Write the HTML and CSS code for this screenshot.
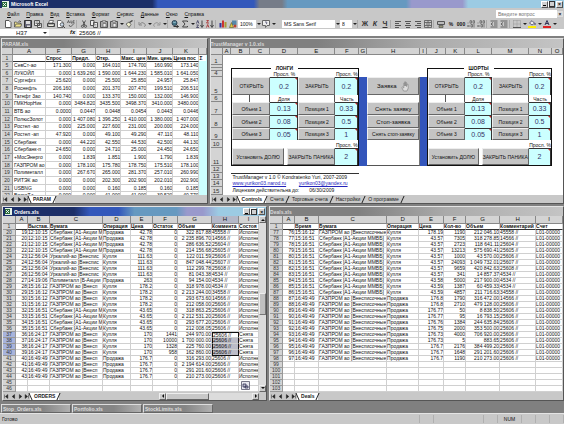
FILE: index.html
```html
<!DOCTYPE html>
<html lang="ru">
<head>
<meta charset="utf-8">
<title>Microsoft Excel</title>
<link rel="stylesheet" href="styles.css">
</head>
<body>
<svg class="defs" aria-hidden="true">
  <symbol id="new" viewBox="0 0 8 8"><path d="M1.5.5h3.500l2 2v5h-5.500z" fill="#fff" stroke="#555"/></symbol>
  <symbol id="open" viewBox="0 0 8 8"><path d="M.5 7V2h2l1 1h3v1M.5 7l1.500-3h6L6.500 7z" fill="#eee28a" stroke="#555" stroke-width=".8"/><path d="M4.500 1.500q1.500-1.500 2.500.5" fill="none" stroke="#333" stroke-width=".8"/></symbol>
  <symbol id="save" viewBox="0 0 8 8"><path d="M.5.5h7v7h-7z" fill="#667" stroke="#333"/><path d="M2 1h4v3H2zM3 5.500h3V7H3z" fill="#ddd"/></symbol>
  <symbol id="mail" viewBox="0 0 8 8"><path d="M.5.5h5v5h-5zM3.500 3.500h4v4h-4z" fill="#eee" stroke="#555"/><path d="M1.500 2h3M1.500 3.500h2M3.500 4l2 2 2-2" stroke="#555" stroke-width=".7" fill="none"/></symbol>
  <symbol id="print" viewBox="0 0 8 8"><path d="M2.500.5h4L5.500 3h-4z" fill="#fff" stroke="#555" stroke-width=".8"/><path d="M.5 3.500h7v3h-7z" fill="#aaa" stroke="#444"/><path d="M2 5.500h4" stroke="#eed"/></symbol>
  <symbol id="preview" viewBox="0 0 8 8"><path d="M.5.5h3.500l2 2v5H.5z" fill="#fff" stroke="#666"/><circle cx="5" cy="4.500" r="1.800" fill="#cde" stroke="#444" stroke-width=".8"/><path d="M6 6l2 2" stroke="#444"/></symbol>
  <symbol id="spell" viewBox="0 0 8 8"><path d="M.5 3l1-2.500 1 2.500M4 .5v2.500h1.500M7.500.8H6v2h1.500M2 5l1.500 2L7 3.500" fill="none" stroke="#555" stroke-width=".9"/></symbol>
  <symbol id="cut" viewBox="0 0 8 8"><path d="M2.500.5l2.500 5M5.500.5L3 5.500" stroke="#555"/><circle cx="2.500" cy="6.300" r="1.100" fill="none" stroke="#555"/><circle cx="5.500" cy="6.300" r="1.100" fill="none" stroke="#555"/></symbol>
  <symbol id="copy" viewBox="0 0 8 8"><path d="M.5.5H4v5H.5zM3.500 2.500h4v5h-4z" fill="#eee" stroke="#555"/><path d="M4.500 4.500h2M4.500 6h2" stroke="#777" stroke-width=".6"/></symbol>
  <symbol id="paste" viewBox="0 0 8 8"><path d="M.5 1.500h7v6h-7z" fill="#aaa" stroke="#555"/><path d="M2.500.5h3v1.500h-3zM3 3.500h3v3.500H3z" fill="#eee" stroke="#666" stroke-width=".7"/></symbol>
  <symbol id="brush" viewBox="0 0 8 8"><path d="M1 4l3-2 2 2.500L4 7.500z" fill="#eec" stroke="#555" stroke-width=".8"/><path d="M4.500 2.500L7.500.5" stroke="#444" stroke-width="1.400"/></symbol>
  <symbol id="undo" viewBox="0 0 8 8"><path d="M1 2v3h3M1.500 4.500Q4 1 6.500 3.500T6 6.500" fill="none" stroke="#888"/></symbol>
  <symbol id="redo" viewBox="0 0 8 8"><path d="M7 2v3H4M6.500 4.500Q4 1 1.500 3.500T2 6.500" fill="none" stroke="#999"/></symbol>
  <symbol id="link" viewBox="0 0 8 8"><circle cx="3.500" cy="3" r="2.500" fill="#478" stroke="#345"/><path d="M2 2q1.500 1 3 0" stroke="#bde" stroke-width=".7" fill="none"/><path d="M2.500 6.500h5M5.500 5l2 1.500-2 1.300" fill="none" stroke="#333"/></symbol>
  <symbol id="sum" viewBox="0 0 8 8"><path d="M6.500 2V1h-5l2.500 3-2.500 3h5V6" fill="none" stroke="#444"/></symbol>
  <symbol id="sort" viewBox="0 0 8 8"><path d="M.5 3.500l1.200-3 1.200 3M.5 5h2L.5 7.500h2.500" fill="none" stroke="#446" stroke-width=".9"/><path d="M6 .5v6M4.500 5L6 7.500 7.500 5" fill="none" stroke="#444"/></symbol>
  <symbol id="sort2" viewBox="0 0 8 8"><path d="M.5 7.500l1.200-3 1.200 3M.5.5h2L.5 3h2.500" fill="none" stroke="#a33" stroke-width=".9"/><path d="M6 .5v6M4.500 5L6 7.500 7.500 5" fill="none" stroke="#444"/></symbol>
  <symbol id="chart" viewBox="0 0 8 8"><path d="M.5 3h2v4.500h-2z" fill="#339"/><path d="M3 .5h2v7H3z" fill="#c33"/><path d="M5.500 2h2v5.500h-2z" fill="#a93"/></symbol>
  <symbol id="draw" viewBox="0 0 8 8"><path d="M3 .5h4.500V5H3z" fill="#58a"/><path d="M.5 7.500l2-5 2 5z" fill="#dc4" stroke="#553" stroke-width=".6"/><circle cx="6" cy="6" r="1.500" fill="#b43"/></symbol>
  <symbol id="help" viewBox="0 0 8 8"><path d="M.5.5h7v5H5l-1.500 2v-2h-3z" fill="#eee" stroke="#666"/><path d="M3 2.300q1-1 1.800 0T4 4" fill="none" stroke="#446" stroke-width=".8"/></symbol>
  <symbol id="left" viewBox="0 0 8 8"><path d="M1 1.500h6M1 3.500h4M1 5.500h6M1 7.500h4" stroke="#555"/></symbol>
  <symbol id="center" viewBox="0 0 8 8"><path d="M1 1.500h6M2 3.500h4M1 5.500h6M2 7.500h4" stroke="#555"/></symbol>
  <symbol id="right" viewBox="0 0 8 8"><path d="M1 1.500h6M3 3.500h4M1 5.500h6M3 7.500h4" stroke="#555"/></symbol>
  <symbol id="merge" viewBox="0 0 8 8"><path d="M.5.5h7v7h-7zM.5 2.500h7M.5 5.500h7M4 .5v2M4 5.500v2M2 4h4" fill="none" stroke="#555" stroke-width=".8"/></symbol>
  <symbol id="money" viewBox="0 0 8 8"><path d="M.5 1.500h7v3h-7z" fill="#bbb" stroke="#555"/><path d="M2 5.500h4v2H2z" fill="#997" stroke="#555" stroke-width=".7"/></symbol>
  <symbol id="digits" viewBox="0 0 8 8"><path d="M3 .7h1.500v2.500H3zM6 .7h1.500v2.500H6zM4 4.500h1.500V7H4zM.5 3h1M7 4v3.500M.5 6h2.500M1.500 5l-1 1 1 1" fill="none" stroke="#666" stroke-width=".8"/></symbol>
  <symbol id="indent" viewBox="0 0 8 8"><path d="M.5 1h7M4 3h3.500M4 5h3.500M.5 7h7M3 2.500L1 4l2 1.500" fill="none" stroke="#555" stroke-width=".9"/></symbol>
  <symbol id="borders" viewBox="0 0 8 8"><path d="M.5.5h7v7M.5.5v7M4 .5v7M.5 4h7" fill="none" stroke="#999" stroke-dasharray="1 1"/><path d="M0 7.500h8" stroke="#555"/></symbol>
  <symbol id="fill" viewBox="0 0 8 8"><path d="M1.500 3L4 .7 6.500 3.200 4 5z" fill="#eee" stroke="#446" stroke-width=".8"/><path d="M7 3v2" stroke="#446"/><path d="M0 6h8v2H0z" fill="#fe0"/></symbol>
  <symbol id="color" viewBox="0 0 8 8"><path d="M2 5L4 .5 6 5M2.700 3.500h2.600" fill="none" stroke="#335"/><path d="M0 6h8v2H0z" fill="#d22"/></symbol>
  <symbol id="xl" viewBox="0 0 7 7"><path d="M0 0h7v7H0z" fill="#e8f4e8"/><path d="M0 1h5v5H0z" fill="#286a3a"/><path d="M1 2l3 3M4 2L1 5" stroke="#fff" stroke-width=".9"/></symbol>
  <symbol id="nav" viewBox="0 0 26 5"><path d="M.5.5v4M4 .5v4l-2.500-2zM11 .5v4l-2.500-2zM16 .5v4l2.500-2zM22 .5v4l2.500-2zM25.500.5v4" fill="#222" stroke="#222" stroke-width=".5"/></symbol>
  <symbol id="hand" viewBox="0 0 8 11"><path d="M2.500 10L.8 6.500l.8-.5 1.200 1V2h.9v3V.8h.9V5V1.500h.9V5.500l.6-2.500h.8L7.300 7 6 10z" fill="#ddd" stroke="#888" stroke-width=".7"/></symbol>
</svg>

<div class="app">
  <header class="titlebar">
    <svg class="xl"><use href="#xl"/></svg><h1>Microsoft Excel</h1>
    <div class="winbtns"><button class="min" aria-label="Свернуть"></button><button class="max" aria-label="Восстановить"></button><button class="close" aria-label="Закрыть">×</button></div>
  </header>

  <nav class="menubar">
    <a href="#">Файл</a><a href="#">Правка</a><a href="#">Вид</a><a href="#">Вставка</a><a href="#">Формат</a><a href="#">Сервис</a><a href="#">Данные</a><a href="#">Окно</a><a href="#">Справка</a>
    <input class="ask" type="text" placeholder="Введите вопрос" aria-label="Введите вопрос">
    <button class="closebook" aria-label="Закрыть книгу">×</button>
  </nav>

  <div class="toolbar" id="toolbar">
  </div>

  <div class="formula">
    <input class="namebox" type="text" value="H37" aria-label="Имя">
    <i class="arrow"></i><span class="fx">fx</span>
    <input class="fvalue" type="text" value="25606 //" aria-label="Формула">
  </div>

  <main class="workspace">
    <div class="row top">
      <section class="window param">
        <h2 class="caption">PARAM.xls</h2>
        <div class="sheet"><table id="param"></table></div>
        <div class="tabs"><svg class="nav"><use href="#nav"/></svg><button class="tab on">PARAM</button></div>
      </section>

      <section class="window trust">
        <h2 class="caption">TrustManager v 1.0.xls</h2>
        <div class="sheet form" id="form">
          <div class="panel longs">
            <b class="legend">ЛОНГИ</b>
          </div>
          <div class="stripe s1"></div>
          <div class="middle">
            <button class="m5">Заявка <svg class="hand"><use href="#hand"/></svg></button>
            <button class="m7">Снять заявку</button>
            <button class="m8">Стоп-заявка</button>
            <button class="m9">Снять стоп-заявку</button>
          </div>
          <div class="stripe s2"></div>
          <div class="panel shorts">
            <b class="legend">ШОРТЫ</b>
          </div>
          <div class="about about1">TrustManager v 1.0 © Kondratenko Yuri, 2007-2009</div>
          <div class="about about2"><a href="#">www.yurikon03.narod.ru</a><a href="#">yurikon03@yandex.ru</a></div>
          <div class="about about3"><span>Лицензия действительна до:</span><span>06/30/2009</span></div>
        </div>
        <div class="tabs"><svg class="nav"><use href="#nav"/></svg><button class="tab on">Controls</button><button class="tab">Счета</button><button class="tab">Торговые счета</button><button class="tab">Настройки</button><button class="tab">О программе</button></div>
      </section>
    </div>

    <div class="row bottom">
      <section class="window orders active">
        <h2 class="caption"><svg class="xl"><use href="#xl"/></svg>Orders.xls
          <span class="winbtns"><button class="min" aria-label="Свернуть"></button><button class="max" aria-label="Развернуть"></button><button class="close" aria-label="Закрыть">×</button></span>
        </h2>
        <div class="body">
          <div class="sheet"><table id="orders"></table></div>
          <div class="vscroll"><button class="up" aria-label="Вверх"></button><i></i><button class="down" aria-label="Вниз"></button></div>
          <svg class="smart" viewBox="0 0 9 9"><path d="M.5.5h8v8h-8z" fill="#e8e8f0" stroke="#778"/><path d="M2 3h3v3H2zM4 5h3v2H4z" fill="#bbc" stroke="#335" stroke-width=".8"/></svg>
        </div>
        <div class="tabs"><svg class="nav"><use href="#nav"/></svg><button class="tab on">ORDERS</button>
          <div class="hscroll"><button class="prev" aria-label="Влево"></button><i></i><button class="next" aria-label="Вправо"></button></div>
        </div>
      </section>

      <section class="window deals">
        <h2 class="caption">Deals.xls</h2>
        <div class="sheet"><table id="deals"></table></div>
        <div class="tabs"><svg class="nav"><use href="#nav"/></svg><button class="tab on">Deals</button></div>
      </section>
    </div>

    <div class="minimized"><button>Stop_Orders.xls</button><button>Portfolio.xls</button><button>StockLimits.xls</button></div>
  </main>

  <footer class="status"><span class="ready">Готово</span><span class="w1"></span><span class="w2"></span><span class="w1"></span><span class="w3">NUM</span><span class="w1"></span><span class="w1"></span><span class="w1"></span></footer>
</div>
<script src="app.js"></script>
</body>
</html>
```
FILE: styles.css
```css
* { box-sizing: border-box; }
body { margin: 0; background: #fff; color: #111; font: 5px/6px "Liberation Sans", sans-serif; }
h1, h2 { margin: 0; font: inherit; font-weight: bold; }
button, input, select { margin: 0; padding: 0; border: 0; border-radius: 0; font: inherit; color: inherit; background: none; min-width: 0; }
.defs { display: none; }

.app { display: flex; flex-direction: column; height: calc(100vh - 15px); background: #c8c8c8; }

/* application caption */
.titlebar { display: flex; align-items: center; gap: 2px; height: 8px; flex: none; padding: 0 1px 0 2px; color: #fff;
  background: linear-gradient(90deg, #1c2f68 27%, #3358bb 28% 45%, #767c88 46% 50%, #6699c0 51% 72%, #9999cc 73% 82%, #9ccbe3 83%); }
.titlebar h1 { flex: 1; }
.xl { width: 7px; height: 7px; flex: none; }
.winbtns { display: flex; margin-left: auto; }
.winbtns button { width: 7px; height: 7px; background: #d0d0d0; border: 1px solid; border-color: #fff #555 #555 #fff; display: grid; place-content: center; color: #000; font-weight: bold; }
.winbtns .min::before { content: ""; width: 3px; height: 1px; margin-top: 3px; background: #000; }
.winbtns .max::before { content: ""; width: 4px; height: 4px; border: 1px solid #333; }
.winbtns .close { margin-left: 1px; }

.menubar { display: flex; align-items: center; gap: 7px; height: 11px; flex: none; padding: 0 1px 0 7px; }
.menubar a { color: #111; text-decoration: none; }
.menubar a::first-letter { text-decoration: underline; }
.ask { width: 61px; height: 8px; margin-left: auto; padding: 0 2px; background: #fff; }
.ask::placeholder { color: #777; opacity: 1; }
.closebook { margin-left: -7px; width: 6px; background: #ddd; font-weight: bold; }

.toolbar { display: flex; align-items: center; height: 10px; flex: none; padding-left: 3px; }
.toolbar button { width: 10px; height: 8px; flex: none; display: grid; place-content: center; font-weight: bold; }
.toolbar svg { width: 8px; height: 8px; display: block; }
.toolbar .sep { width: 3px; flex: none; height: 8px; border-left: 1px solid #aaa; }
.toolbar .drop { width: 5px; height: 8px; flex: none; display: grid; place-content: center; }
.toolbar select { appearance: none; height: 8px; padding: 0 2px; background: #fff; flex: none; }
.toolbar .zoom { width: 18px; }
.toolbar .fontname { width: 53px; margin-left: 6px; }
.toolbar .fontsize { width: 12px; }
.toolbar .bold, .toolbar .ital, .toolbar .under { font-size: 7px; line-height: 8px; color: #333; }
.toolbar .ital { font-style: italic; }
.toolbar .under { text-decoration: underline; }
.drop::before, .arrow::before { content: ""; display: block; border: 1px solid transparent; border-width: 2px 2px 0; border-top-color: #222; }

.formula { display: flex; align-items: center; gap: 2px; height: 7px; flex: none; background: #fff; font-size: 6px; }
.namebox { width: 41px; padding-left: 16px; height: 7px; }
.fx { width: 28px; height: 7px; padding-left: 21px; background: #f0f0f0; font-weight: bold; font-style: italic; }
.fvalue { flex: 1; height: 7px; }

/* workbook windows */
.workspace { flex: 1; min-height: 0; display: grid; grid-template-columns: minmax(0, 1fr); grid-template-rows: minmax(0, 166fr) minmax(0, 194fr) 10px; gap: 2px; padding-top: 2px; background: #808080; }
.row { display: flex; gap: 2px; min-height: 0; }
.top { padding-left: 1px; }
.bottom { padding-left: 2px; }
.window { display: flex; flex-direction: column; min-width: 0; min-height: 0; border: 1px solid; border-color: #e4e4e4 #555 #555 #e4e4e4; background: #c8c8c8; }
.param { flex: 206 1 0; }
.trust { flex: 355 1 0; }
.orders { flex: 265 1 0; }
.deals { flex: 295 1 0; }
.caption { display: flex; align-items: center; gap: 2px; flex: none; height: 9px; color: #d8d8d8; background: linear-gradient(90deg, #808080 30%, #aaa 60%, #c4c4c4); }
.active .caption { color: #fff; padding: 0 1px 0 2px; background: linear-gradient(90deg, #1c2f68 27%, #3358bb 33% 44%, #6699c0 50% 66%, #9999cc 70% 76%, #9ccbe3 82%); }
.body { flex: 1; min-height: 0; display: flex; position: relative; }
.sheet { flex: 1; min-height: 0; min-width: 0; overflow: hidden; background: #fff; }

table { width: 100%; table-layout: fixed; border-collapse: separate; border-spacing: 0; }
th, td { height: 6px; padding: 0; line-height: 5px; font-weight: normal; text-align: left; white-space: nowrap; overflow: hidden; border: 0 solid #d0d0d0; border-width: 0 1px 1px 0; }
thead th { height: 8px; line-height: 7px; font-size: 6px; text-align: center; background: #d4d4d4; border-color: #888; }
tbody th { text-align: center; background: #d4d4d4; border-color: #999; color: #333; }
.titles td { font-weight: bold; border-bottom-color: #333; }
td.num { text-align: right; }
#param thead th { height: 7px; line-height: 6px; }
#param td, #param tbody th { height: 8px; line-height: 7px; }
#param td:nth-child(2) { padding-left: 1px; }
#param tr:nth-child(3n) > * { height: 7px; line-height: 6px; }
#param tr.titles > * { height: 7px; line-height: 6px; }
#param td:last-child { background: #ccffff; border-color: #ccffff; }
#param .titles td:last-child { background: #fff; }
th.hot { background: #a8b4dc; }
thead th.hot { background: #b4b8c8; }
td.sel { border-left: 1px solid #111; border-right-color: #111; background: #bcbcc8; }
td.sel.first { background: #fff; border-top: 1px solid #111; line-height: 4px; }
td.sel.last { border-bottom-color: #111; }

.tabs { display: flex; align-items: center; flex: none; height: 8px; padding-left: 1px; background: #c8c8c8; color: #222; }
.nav { width: 25px; height: 5px; margin-right: 1px; flex: none; }
.tab { position: relative; height: 7px; padding: 0 4px; white-space: nowrap; }
.tab::after, .tab.on::before { content: ""; position: absolute; top: 0; bottom: 0; width: 1px; background: #222; }
.tab::after { right: 0; transform: skewX(-24deg); }
.tab.on::before { left: 0; transform: skewX(24deg); }
.tab.on { background: #fff; font-weight: bold; }

.vscroll { width: 7px; display: flex; flex-direction: column; background: #dcdcdc; }
.vscroll button, .hscroll button { width: 7px; height: 7px; flex: none; display: grid; place-content: center; background: #ccc; border: 1px solid; border-color: #eee #666 #666 #eee; }
.vscroll i { flex: 0 0 22px; margin: auto 0; background: #c0c0c0; border: 1px solid; border-color: #eee #777 #777 #eee; }
.vscroll button::before, .hscroll button::before { content: ""; border: 2px solid transparent; }
.up::before { border-top: 0 !important; border-bottom-color: #111 !important; }
.down::before { border-bottom: 0 !important; border-top-color: #111 !important; }
.prev::before { border-left: 0 !important; border-right-color: #111 !important; }
.next::before { border-right: 0 !important; border-left-color: #111 !important; }
.hscroll { display: flex; flex: 0 0 100px; margin: 0 7px 0 auto; background: #dcdcdc; }
.hscroll i { flex: 0 0 43px; margin-right: auto; background: #c8c8c8; border: 1px solid; border-color: #eee #666 #666 #eee; }
.smart { position: absolute; right: 16px; bottom: 2px; width: 9px; height: 9px; }

/* trading form */
.form { display: grid;
  grid-template-columns: minmax(0,12fr) minmax(0,9fr) minmax(0,19fr) minmax(0,20fr) minmax(0,28fr) minmax(0,37fr) minmax(0,24fr) minmax(0,8fr) minmax(0,53fr) minmax(0,7fr) minmax(0,19fr) minmax(0,19fr) minmax(0,27fr) minmax(0,37fr) minmax(0,23fr) minmax(0,11fr);
  grid-template-rows: 7px 10px 3px 3px 6px 18px 7px 13px 13px 12px 8px 18px 7px 7px 7px 1fr; }
.colhead, .rowhead { background: #d4d4d4; border: 0 solid #888; border-width: 0 1px 1px 0; display: flex; justify-content: center; overflow: hidden; font-size: 6px; }
.colhead { grid-row: 1; }
.rowhead { grid-column: 1; align-items: flex-end; color: #333; }
.panel { grid-row: 4 / 13; display: grid; grid-template: subgrid / subgrid; border: 1px solid #111; }
.longs { grid-column: 3 / 8; }
.shorts { grid-column: 11 / 16; }
.legend { grid-area: 1 / 3; justify-self: center; margin-top: -4px; padding: 0 5px; background: #fff; height: 6px; white-space: nowrap; }
.cap { display: flex; justify-content: center; align-items: flex-end; white-space: nowrap; line-height: 5px; }
.line { border-right: 1px solid #555; }
.val { position: relative; display: grid; place-content: center; background: #ccffff; border: 0 solid #333; border-width: 1px 1px 0 0; color: #336; font-size: 7px; line-height: 8px; }
.val::after { content: ""; position: absolute; top: 0; right: 0; border: 1px solid #c22; border-left-color: transparent; border-bottom-color: transparent; }
.panel button, .middle button { background: #c4c4c4; border: 1px solid; border-color: #eee #666 #666 #eee; white-space: nowrap; display: flex; align-items: center; justify-content: center; }
.middle button { font-size: 6px; }
.middle .m9 { font-size: 5px; }
.pair { display: flex; gap: 3px; grid-column: 1 / 5; }
.pair button:first-child { flex: 52 1 0; }
.pair button:last-child { flex: 49 1 0; }
.stripe { grid-row: 6 / 13; background: #3355bb; }
.s1 { grid-column: 8; }
.s2 { grid-column: 10; }
.middle { grid-area: 6 / 9 / 13 / 10; display: grid; grid-template: subgrid / subgrid; border-bottom: 1px solid #555; border-right: 1px solid #777; }
.m5 { grid-row: 1; gap: 5px; }
.m7 { grid-row: 3; }
.m8 { grid-row: 4; }
.m9 { grid-row: 5; border-bottom-color: #333; }
.hand { width: 8px; height: 11px; }
.about { grid-column: 3 / 8; white-space: nowrap; display: grid; grid-template-columns: 67fr 61fr; padding-left: 1px; }
.about1 { grid-row: 14; display: block; border-top: 1px solid #333; }
.about2 { grid-row: 15; }
.about3 { grid-row: 16; }
.about3 span:last-child { padding-left: 10px; }
.about a { color: #2222bb; }

.minimized { display: flex; gap: 1px; padding: 1px 0 0 1px; }
.minimized button { width: 70px; text-align: left; padding-left: 1px; color: #ddd; font-weight: bold; background: linear-gradient(90deg, #858585 60%, #b0b0b0); border: 1px solid; border-color: #ddd #666 #666 #ddd; }

.status { display: flex; align-items: center; height: 11px; flex: none; padding-left: 2px; background: #c8c8c8; border-top: 1px solid #e4e4e4; }
.status span { height: 8px; line-height: 8px; border: 0 solid #b0b0b0; border-right-width: 1px; }
.status .ready { flex: 1; }
.w1 { width: 14px; }
.w2 { width: 50px; }
.w3 { width: 24px; text-align: center; }
```
FILE: app.js
```js
const el = (tag, cls, text) => {
  const n = document.createElement(tag);
  if (cls) n.className = cls;
  if (text !== undefined) n.textContent = text;
  return n;
};

/* toolbar: icon ids, "|" separator, "v" drop arrow, other entries are literal controls */
const labels = { new: "Создать", open: "Открыть", save: "Сохранить", print: "Печать" };
const bar = document.getElementById("toolbar");
const tools = ["new", "open", "save", "mail", "|", "print", "preview", "spell", "|", "cut", "copy", "paste", "paste", "v", "brush", "|",
  "undo", "v", "redo", "v", "|", "link", "sum", "v", "sort", "sort2", "|", "chart", "draw", "select:zoom:100%", "v", "help", "v",
  "select:fontname:MS Sans Serif", "v", "select:fontsize:8", "v", "|", "text:bold:Ж", "text:ital:К", "text:under:Ч", "|", "left", "center", "right", "merge", "|",
  "money", "text:pct:%", "text:pct:000", "digits", "digits", "|", "indent", "indent", "|", "borders", "v", "fill", "v", "color", "v"];
tools.forEach(t => {
  if (t === "|") return bar.append(el("i", "sep"));
  if (t === "v") return bar.append(el("i", "drop"));
  const [kind, cls, text] = t.split(":");
  if (kind === "select") {
    const s = el("select", cls);
    s.setAttribute("aria-label", cls);
    s.append(el("option", "", text));
    return bar.append(s);
  }
  if (kind === "text") return bar.append(el("button", cls, text));
  const b = el("button");
  b.setAttribute("aria-label", labels[t] || t);
  b.innerHTML = `<svg><use href="#${t}"/></svg>`;
  bar.append(b);
});

function build(id, widths, letters, titles, rows, numeric, mark) {
  const table = document.getElementById(id);
  const cg = el("colgroup");
  widths.forEach(w => { const c = el("col"); c.style.width = w + "px"; cg.append(c); });
  const head = el("thead"), hr = el("tr");
  ["", ...letters].forEach(l => hr.append(el("th", mark && l === "H" ? "hot" : "", l)));
  head.append(hr);
  const body = el("tbody"), tr = el("tr", "titles");
  tr.append(el("th", "", "1"));
  titles.forEach(t => tr.append(el("td", "", t)));
  body.append(tr);
  rows.forEach(r => {
    const line = el("tr"), n = r[0], hot = mark && n >= mark[0] && n <= mark[1];
    line.append(el("th", hot ? "hot" : "", n));
    letters.forEach((l, i) => {
      let cls = numeric.includes(l) ? "num" : "";
      if (hot && l === "H") cls = "sel" + (n === mark[0] ? " first" : n === mark[1] ? " last" : "");
      line.append(el("td", cls, r[i + 1] || ""));
    });
    body.append(line);
  });
  table.append(cg, head, body);
}

build("param", [11, 33, 26, 24, 25, 26, 26, 26, 7], ["A", "F", "G", "H", "I", "J", "K", ""],
  ["", "Спрос", "Предл.", "Откр.", "Макс. цен", "Мин. цень", "Цена пос", "Σ"],
  `5|СевСт-ао|171.300|0.000|164.010|174.700|160.990|173.140
6|ЛУКОЙЛ|0.000|1 639.260|1 590.000|1 644.230|1 585.010|1 641.050
7|Сургнфгз|25.620|0.000|25.500|25.850|24.957|25.847
8|Роснефть|206.160|0.000|201.370|207.470|199.510|206.510
9|Татнфт 3ао|140.740|0.000|133.370|150.000|132.000|146.900
10|ГМКНорНик|0.000|3484.820|3435.500|3498.370|3410.000|3480.000
11|ВТБ ао|0.0000|0.0447|0.0448|0.0454|0.0443|0.0446
12|ПолюсЗолот|0.000|1 407.080|1 396.250|1 410.000|1 380.000|1 407.000
13|Ростел -ао|0.000|225.000|227.600|231.000|200.000|224.000
14|Ростел -ап|47.920|0.000|49.100|49.290|47.110|48.110
15|Сбербанк|0.000|44.220|42.550|44.530|42.500|44.130
16|Сбербанк-п|24.650|0.000|24.710|25.000|24.450|24.650
17|+МосЭнерго|0.000|1.839|1.851|1.900|1.790|1.839
18|ГАЗПРОМ ао|0.000|178.100|175.780|178.750|175.510|178.100
19|Полиметалл|0.000|267.670|265.000|281.370|257.010|260.990
20|РИТЭК ао|0.000|0.000|202.300|202.900|202.010|202.900
21|USBNG|0.000|0.000|0.160|0.185|0.160|0.185
22|ВолгаТ.т|0.000|0.000|41.000|41.000|39.520|40.770`.split("\n").map(s => s.split("|")),
  ["F", "G", "H", "I", "J", "K"]);

const orders = [], sber = "Сбербанк [А1-Акции М", gaz = "ГАЗПРОМ ао [Внесп";
const addOrders = (time, paper, op, price, list, state) => list.forEach(([rest, vol, note]) => {
  const n = 20 + orders.length;
  orders.push([n, String(n - 1), time, paper, op, price, rest, vol, note + " //", state]);
});
addOrders("12:10:15", sber, "Продажа", "42.78", [["0", "322 817.88", "45558"], ["0", "2 235 896.70", "14566"], ["0", "286 636.52", "25604"], ["0", "214 156.68", "25605"]], "Исполне");
addOrders("12:56:04", "Уркалий-ао [Внеспис", "Купля", "111.63", [["0", "122 011.59", "25606"], ["0", "847 048.44", "25607"], ["0", "112 299.78", "25608"], ["0", "81 043.38", "4534"]], "Исполне");
addOrders("14:19:06", "Полиметалл [Б-Акции", "Продажа", "263", [["0", "94 154.00", "4534"]], "Исполне");
addOrders("15:16:12", gaz, "Купля", "178.2", [["0", "318 978.00", "4534"], ["0", "2 213 244.00", "34558"], ["0", "293 673.60", "14566"], ["0", "212 058.00", "25606"]], "Исполне");
addOrders("15:16:51", sber, "Купля", "43.65", [["0", "318 863.25", "25606"], ["0", "2 212 531.20", "25606"], ["0", "293 677.20", "25606"], ["0", "212 008.05", "25606"]], "Исполне");
addOrders("16:24:17", gaz, "Купля", "170", [["1441", "244 970.00", "25606"], ["10000", "1 700 000.00", "25606"], ["1328", "225 760.00", "25606"], ["958", "162 860.00", "25606"]], "Снята");
addOrders("16:49:49", gaz, "Продажа", "176.7", [["0", "316 293.00", "25606"], ["0", "2 194 614.00", "25606"], ["0", "291 201.60", "25606"], ["0", "210 273.00", "25606"]], "Исполне");
orders.push([45], [46]);
build("orders", [13, 12, 22, 53, 28, 22, 25, 34, 27, 20], [..."ABCDEFGHI"],
  ["", "Выстав.", "Бумага", "Операция", "Цена", "Остаток", "Объем", "Коммента", "Состоя"],
  orders, ["A", "E", "F", "G"], [37, 40]);

const deals = `178.19|1190|212 046.10|45558
43.57|7305|318 278.85|14566
43.57|2723|118 641.11|25604
43.57|13213|575 690.41|25605
43.57|1000|43 570.00|25606
43.57|24093|1 049 732.01|25607
43.57|9659|420 842.63|25608
43.57|341|14 857.37|4534
43.58|5000|217 900.00|4534
43.59|1387|60 459.33|4534
43.59|4857|211 716.63|34558
176.8|1790|316 472.00|14566
176.8|2710|479 128.00|25606
176.77|50|8 838.50|25606
176.77|95|16 793.15|25606
176.76|1384|244 635.84|25606
176.75|2000|353 500.00|25606
176.73|4000|706 920.00|25606
176.73|5|883.65|25606
176.7|2176|384 499.20|25606
176.7|1648|291 201.60|25606
176.7|1190|210 273.00|25606`.split("\n").map((s, i) => {
  const [price, qty, vol, note] = s.split("|");
  const late = i > 10, time = i === 0 ? "15:16:12" : late ? "16:49:49" : "15:16:51";
  const paper = i === 0 || late ? "ГАЗПРОМ ао [Внесписочные" : "Сбербанк [А1-Акции ММВБ]";
  return [77 + i, String(76 + i), time, paper, late ? "Продажа" : "Купля", price, qty, vol, note + " //", "L01-00000"];
});
for (let n = 99; n < 104; n++) deals.push([n]);
build("deals", [13, 12, 24, 68, 32, 25, 22, 34, 36, 27], [..."ABCDEFGHI"],
  ["", "Время", "Бумага", "Операция", "Цена", "Кол-во", "Объем", "Комментарий", "Счет"],
  deals, ["A", "E", "F", "G"]);

/* trading form headings and panels */
const form = document.getElementById("form");
["", ..."ABCDEFGHIJKLMNO"].forEach((l, i) => {
  const h = el("div", "colhead", l);
  h.style.gridColumn = i + 1;
  form.append(h);
});
for (let r = 1; r <= 15; r++) {
  const h = el("div", "rowhead", r === 2 || r === 3 ? "" : r);
  h.style.gridRow = r + 1;
  form.append(h);
}
document.querySelectorAll(".panel").forEach(p => {
  const put = (tag, cls, text, row, col) => {
    const n = el(tag, cls, text);
    n.style.gridArea = `${row} / ${col}`;
    p.append(n);
    return n;
  };
  put("span", "cap", "Просл. %", 2, 3);
  put("span", "cap", "Просл. %", 2, 5);
  [[3, "ОТКРЫТЬ", "0.2", "ЗАКРЫТЬ", "0.2"], [5, "Объем 1", "0.13", "Позиция 1", "0.33"],
   [6, "Объем 2", "0.08", "Позиция 2", "0.5"], [7, "Объем 3", "0.05", "Позиция 3", "1"]].forEach(([row, a, x, b, y]) => {
    put("button", "", a, row, 1).style.gridColumn = "1 / 3";
    put("span", "val", x, row, 3);
    put("button", "", b, row, 4);
    put("span", "val", y, row, 5);
  });
  put("span", "line", "", 4, 1);
  put("span", "line", "", 4, 2);
  put("span", "cap line", "Доля", 4, 3);
  put("span", "line", "", 4, 4);
  put("span", "cap", "Часть", 4, 5);
  put("span", "cap", "Просл. %", 8, 5);
  const pair = put("div", "pair", "", 9, 1);
  pair.style.gridColumn = "1 / 5";
  pair.append(el("button", "", "Установить ДОЛЮ"), el("button", "", "ЗАКРЫТЬ ПАНИКА"));
  put("span", "val", "2", 9, 5);
});
```
